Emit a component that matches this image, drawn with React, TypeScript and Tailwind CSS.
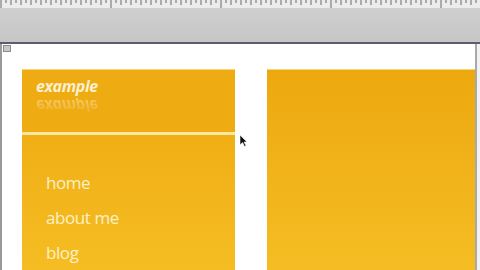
import React from 'react'

const navItems = ['home', 'about me', 'blog']

function Ruler() {
  const ticks = Array.from({ length: 96 }, (_, i) => i)
  return (
    <div className="h-[8px] bg-[#ececec] relative overflow-hidden">
      <svg width="480" height="8" className="block">
        {ticks.map((i) => (
          <line
            key={i}
            x1={i * 5 + 1}
            x2={i * 5 + 1}
            y1={0}
            y2={i % 22 === 0 ? 8 : i % 2 === 0 ? 5 : 3}
            stroke="#6b6b6b"
            strokeWidth={1}
          />
        ))}
      </svg>
    </div>
  )
}

export default function App() {
  return (
    <div className="w-[480px] h-[270px] overflow-hidden bg-white flex flex-col font-['Open_Sans',sans-serif]">
      <Ruler />
      {/* toolbar band */}
      <div className="h-[36px] bg-gradient-to-b from-[#cfcfcf] to-[#c6c6c6] border-b-2 border-[#5d5d70]" />

      {/* canvas */}
      <div className="flex-1 flex relative">
        <div className="w-[2px] bg-[#9a9a9a]" />
        <div className="flex-1 flex flex-col bg-white">
          <div className="h-[25px] flex items-start">
            <div className="w-[8px] h-[7px] ml-[1px] mt-[1px] bg-[#c8c8c8] border border-[#8a8a8a]" />
          </div>
          <div className="flex-1 flex pl-[20px] gap-[32px]">
            {/* left column */}
            <div className="w-[213px] flex flex-col border-t border-[#f6d47c]">
              <div className="h-[62px] bg-[#eeab12] pl-[14px] pt-[7px]">
                <div className="text-[16px] font-bold italic text-[#fbf0cf] leading-[19px] tracking-tight">example</div>
                <div className="mt-[2px] text-[16px] font-bold italic leading-[16px] -scale-y-100 tracking-tight bg-gradient-to-t from-[#f8d98a] to-[#efb023] bg-clip-text text-transparent opacity-70 w-fit">
                  example
                </div>
              </div>
              <div className="h-[3px] bg-[#fbe7a2]" />
              <div className="flex-1 bg-gradient-to-b from-[#f0af14] to-[#f5bd23] pl-[24px] pt-[36px] flex flex-col gap-[12px]">
                {navItems.map((item) => (
                  <div key={item} className="text-[17px] leading-[23px] text-[#fcf0c8] tracking-tight">
                    {item}
                  </div>
                ))}
              </div>
            </div>
            {/* right panel */}
            <div className="flex-1 border-t border-[#f6d47c] bg-gradient-to-b from-[#eda80e] to-[#f5bd23]" />
          </div>
        </div>
        <div className="w-[2px] bg-[#a8a8a8]" />
        <div className="w-[3px] bg-[#f2f2f2]" />
        {/* mouse cursor */}
        <svg className="absolute left-[240px] top-[91px]" width="8" height="12" viewBox="0 0 8 12">
          <path d="M0 0 L0 10 L2.5 7.5 L4.5 11.5 L6 10.8 L4 7 L7 7 Z" fill="#111" stroke="#fff" strokeWidth="0.6" />
        </svg>
      </div>
    </div>
  )
}
